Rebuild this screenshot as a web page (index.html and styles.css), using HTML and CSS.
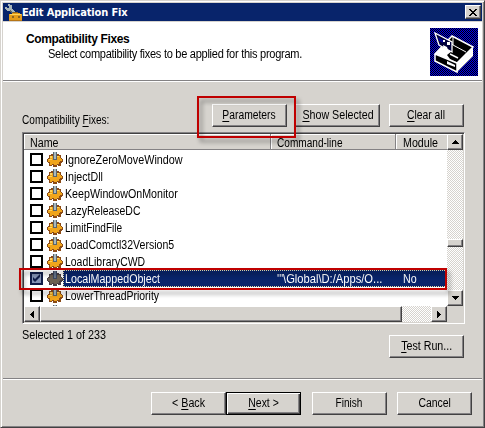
FILE: index.html
```html
<!DOCTYPE html>
<html lang="en">
<head>
<meta charset="utf-8">
<title>Edit Application Fix</title>
<link rel="stylesheet" href="styles.css">
</head>
<body>
<svg class="defs" width="0" height="0" aria-hidden="true">
  <symbol id="gear" viewBox="0 0 16 16">
    <path d="M2 3h2V2h2v1h4V2h2v1h2v3h1v1h1v3h-1v1h-1v3h-3v-1h-1v2H6v-2H5v1H2v-3H1v-1H0V7h1V6h1z" fill="#8a4a16"/>
    <path d="M3 4h3V3h4v1h3v2h1v1h1v2h-2v1h-1v2h-2v1H7v-1H5v1H3v-3H1V7h2z" fill="#f0a51c"/>
    <path d="M3 4h2v2H3zM2 7h3v1H2zM10 4h2v1h-2z" fill="#ffd45c"/>
    <path d="M6 0h4v8H6z" fill="#59656c"/><path d="M7 0h2v7H7z" fill="#a9b8be"/>
  </symbol>
  <symbol id="gear-selected" viewBox="0 0 16 16">
    <path d="M2 3h2V2h2v1h4V2h2v1h2v3h1v1h1v3h-1v1h-1v3h-3v-1h-1v2H6v-2H5v1H2v-3H1v-1H0V7h1V6h1z" fill="#493e43"/>
    <path d="M3 4h3V3h4v1h3v2h1v1h1v2h-2v1h-1v2h-2v1H7v-1H5v1H3v-3H1V7h2z" fill="#6c6051"/>
    <path d="M6 0h4v8H6z" fill="#3b475f"/><path d="M7 0h2v7H7z" fill="#66758a"/>
  </symbol>
</svg>
<div class="window">
  <div class="titlebar">
    <svg class="app-icon" viewBox="0 0 18 17" shape-rendering="crispEdges">
      <path d="M4 0h2v1h2v4h1v1h1v1h1v1h1v2H9V9H8V8H7V7H3V6H2V5H1V3h2v1h2V2H4z" fill="#a9b6bb"/>
      <path d="M6 6h1v1h1v1h1v2H8V9H7V8H6z" fill="#59666e"/>
      <path d="M5 10h3V9h8v1h2v7H5z" fill="#e59c19"/><path d="M6 10h11v1H6z" fill="#ffd45b"/>
      <path d="M9 8h5v1H9zM8 12h2v2H8zM14 12h2v2h-2z" fill="#8d6421"/><path d="M5 16h13v1H5z" fill="#b67516"/>
    </svg>
    <span class="caption">Edit Application Fix</span>
    <span class="close raised"><svg width="8" height="7" viewBox="0 0 8 7" shape-rendering="crispEdges"><path d="M0 0h2v1h1v1h2V1h1V0h2v1H7v1H6v1H5v1h1v1h1v1h1v1H6V6H5V5H3v1H2v1H0V6h1V5h1V4h1V3H2V2H1V1H0z"/></svg></span>
  </div>
  <header class="banner">
    <div class="banner-text">
      <h1>Compatibility Fixes</h1>
      <p class="fit subtitle">Select compatibility fixes to be applied for this program.</p>
    </div>
    <svg class="wizard" viewBox="0 0 48 48">
      <path d="M5 26 22 8 43 19V28L27 44 5 33z" fill="#000"/>
      <path d="M5 26 22 8 43 19 27 35zM5 26V33L27 44V35" fill="none" stroke="#fff" stroke-width="1.5"/>
      <path d="M27 35 43 19V28L27 44z" fill="#fff"/>
      <path d="M5 26 12 19 17 21 22 23 17 27 20 31 24 33 28 35z" fill="#fff"/>
      <path d="M23 9V17L36 24M23 16 12 27" fill="none" stroke="#fff"/>
      <path d="M5 5 22 14V24L9 17z" fill="#00003c" stroke="#fff" stroke-width="1.3"/>
      <path d="M8 9 13 12V15L9 13z" fill="#000090"/>
      <path d="M13 12h2v2h-2zM17 14h3v3h-3zM13 17l4 2 1 3-4 2z" fill="#fff"/>
      <path d="M20 26 28 30" stroke="#fff" stroke-width="1.5"/>
      <path d="M17 33 25 37V39L17 36z" fill="#fff"/>
    </svg>
  </header>
  <main class="content">
    <div class="toolbar">
      <div class="list-label"><span class="fit w84">Compatibility <u>F</u>ixes:</span></div>
      <button class="btn raised"><span class="fit w86"><u>P</u>arameters</span></button>
      <button class="btn raised show"><span class="fit w89"><u>S</u>how Selected</span></button>
      <button class="btn raised"><span class="fit w86"><u>C</u>lear all</span></button>
    </div>
    <div class="list">
      <div class="view">
        <div class="columns"><div class="col"><span class="fit w89">Name</span></div><div class="col"><span class="fit w84">Command-line</span></div><div class="col"><span class="fit w89">Module</span></div></div>
        <div class="rows">
          <div class="row"><i class="check"></i><svg><use href="#gear"/></svg><span class="name fit w90">IgnoreZeroMoveWindow</span></div>
          <div class="row"><i class="check"></i><svg><use href="#gear"/></svg><span class="name fit w89">InjectDll</span></div>
          <div class="row"><i class="check"></i><svg><use href="#gear"/></svg><span class="name fit w89">KeepWindowOnMonitor</span></div>
          <div class="row"><i class="check"></i><svg><use href="#gear"/></svg><span class="name fit w87">LazyReleaseDC</span></div>
          <div class="row"><i class="check"></i><svg><use href="#gear"/></svg><span class="name fit w84">LimitFindFile</span></div>
          <div class="row"><i class="check"></i><svg><use href="#gear"/></svg><span class="name fit w88">LoadComctl32Version5</span></div>
          <div class="row"><i class="check"></i><svg><use href="#gear"/></svg><span class="name fit w87">LoadLibraryCWD</span></div>
          <div class="row selected"><i class="check"><svg class="tick" viewBox="0 0 9 9"><path d="M1 3v3l2 2 5-5V0L3 5z" fill="#101c48"/></svg></i><svg><use href="#gear-selected"/></svg><div class="highlight"><span class="name fit w89">LocalMappedObject</span><span class="fit w93">'"\Global\D:/Apps/O...</span><span class="fit w89">No</span></div></div>
          <div class="row"><i class="check"></i><svg><use href="#gear"/></svg><span class="name fit w87">LowerThreadPriority</span></div>
          <div class="row"><i class="blank"></i><svg><use href="#gear"/></svg></div>
        </div>
      </div>
      <div class="vscroll">
        <span class="arrow raised"><svg viewBox="0 0 7 4" width="7" height="4" shape-rendering="crispEdges"><path d="M3 0h1v1h1v1h1v1h1v1H0V3h1V2h1V1h1z"/></svg></span>
        <span class="track above"></span><span class="thumb-v raised"></span><span class="track"></span>
        <span class="arrow raised"><svg viewBox="0 0 7 4" width="7" height="4" shape-rendering="crispEdges"><path d="M0 0h7v1H6v1H5v1H4v1H3V3H2V2H1V1H0z"/></svg></span>
      </div>
      <div class="hscroll">
        <span class="arrow raised"><svg viewBox="0 0 4 7" width="4" height="7" shape-rendering="crispEdges"><path d="M3 0h1v7H3V6H2V5H1V4H0V3h1V2h1V1h1z"/></svg></span>
        <span class="thumb-h raised"></span><span class="track"></span>
        <span class="arrow raised"><svg viewBox="0 0 4 7" width="4" height="7" shape-rendering="crispEdges"><path d="M0 0h1v1h1v1h1v1h1v1H3v1H2v1H1v1H0z"/></svg></span>
      </div>
      <div class="corner"></div>
    </div>
    <div class="status">
      <span class="count fit w90">Selected 1 of 233</span>
      <button class="btn raised"><span class="fit w89"><u>T</u>est Run...</span></button>
    </div>
  </main>
  <footer class="footer">
    <button class="btn raised"><span class="fit w89">&lt; <u>B</u>ack</span></button>
    <button class="btn raised default"><span class="fit w87"><u>N</u>ext &gt;</span></button>
    <button class="btn raised finish"><span class="fit w84">Finish</span></button>
    <button class="btn raised cancel"><span class="fit w87">Cancel</span></button>
  </footer>
  <div class="callout callout-button"></div>
  <div class="callout callout-row"></div>
</div>
</body>
</html>
```
FILE: styles.css
```css
* { box-sizing: border-box; }
body {
  margin: 0;
  background: #d6d3ce;
  font: 12px/14px "Liberation Sans", Arial, sans-serif;
  color: #000;
  overflow: hidden;
}
.defs { position: absolute; }
u { text-decoration: underline; text-underline-offset: 2px; text-decoration-thickness: 1px; text-decoration-skip-ink: none; }

/* Condensed widths for the dialog face */
.fit { display: inline-block; white-space: nowrap; transform-origin: 0 50%; }
.btn .fit { transform-origin: 50% 50%; }
.w84 { transform: scaleX(.84); }
.w86 { transform: scaleX(.86); }
.w87 { transform: scaleX(.87); }
.w88 { transform: scaleX(.88); }
.w89 { transform: scaleX(.89); }
.w90 { transform: scaleX(.9); }
.w93 { transform: scaleX(.93); }

.window {
  position: relative;
  width: 485px;
  height: 428px;
  display: flex;
  flex-direction: column;
  border: 1px solid;
  border-color: #d6d3ce #424142 #424142 #d6d3ce;
  box-shadow: inset 1px 1px #fff, inset -1px -1px #848284;
  padding: 2px;
}
.raised {
  background: #d6d3ce;
  border: 1px solid;
  border-color: #fff #424142 #424142 #fff;
  box-shadow: inset -1px -1px #848284;
}
.titlebar {
  flex: none;
  height: 18px;
  background: #08246b;
  display: flex;
  align-items: center;
  padding: 0 1px 0 1px;
  color: #fff;
}
.app-icon { width: 18px; height: 17px; flex: none; }
.caption { flex: 1; padding-top: 1px; font: bold 11px/16px "DejaVu Sans Condensed", "DejaVu Sans", sans-serif; white-space: nowrap; letter-spacing: -.15px; }
.close { width: 16px; height: 14px; display: flex; align-items: center; justify-content: center; padding-right: 1px; }
.banner {
  flex: none;
  margin-top: 1px;
  height: 60px;
  background: #fff;
  border-bottom: 1px solid #fff;
  box-shadow: inset 0 -1px #848284;
  display: flex;
  justify-content: space-between;
  padding: 6px 4px 0 23px;
}
.banner-text { padding-top: 4px; white-space: nowrap; }
h1 { margin: 0; font-size: 12px; line-height: 14px; letter-spacing: -.35px; }
.banner p { margin: 1px 0 0 22px; }
.subtitle { letter-spacing: -.3px; transform: scaleX(.92); }
.wizard { width: 48px; height: 48px; background: conic-gradient(#0000f0 25%, #000 0 50%, #0000f0 0 75%, #000 0) 0 0 / 2px 2px; }
.content { flex: none; padding: 22px 16px 0 19px; height: 296px; }
.toolbar { display: flex; height: 28px; align-items: flex-start; }
.list-label { width: 190px; padding-top: 9px; }
.btn {
  width: 75px;
  height: 23px;
  flex: none;
  padding: 0 0 2px;
  margin: 0;
  font: inherit;
  color: #000;
  border-radius: 0;
  display: flex;
  align-items: center;
  justify-content: center;
}
.show { width: 85px; margin: 0 9px 0 8px; padding-left: 1px; }
.list {
  width: 443px;
  height: 192px;
  border: 1px solid;
  border-color: #848284 #fff #fff #848284;
  box-shadow: inset 1px 1px #424142;
  padding: 1px;
  display: grid;
  grid-template: 172px 16px / 423px 16px;
  background: #d6d3ce;
}
.view { background: #fff; overflow: hidden; }
.columns { display: grid; grid-template-columns: 247px 125px 51px; height: 16px; background: #d6d3ce; border-bottom: 1px solid #848284; }
.col { padding-left: 6px; line-height: 18px; border-right: 1px solid #848284; box-shadow: inset 1px 1px #fff; overflow: hidden; }
.col:last-child { border-right: 0; padding-left: 7px; }
.rows { padding-top: 1px; }
.row { height: 17px; display: flex; align-items: center; padding-left: 6px; line-height: 18px; }
.check { width: 13px; height: 13px; border: 2px solid #000; background: #fff; margin-right: 4px; flex: none; display: block; }
.blank { width: 17px; flex: none; }
.row svg { width: 16px; height: 16px; flex: none; }
.row .tick { width: 9px; height: 9px; display: block; }
.name { margin-left: 2px; }
.selected .check { border-color: #101c48; background: #8492b5; }
.highlight {
  width: 384px;
  height: 17px;
  flex: none;
  display: grid;
  grid-template-columns: 214px 126px 1fr;
  color: #fff;
  background: #08246b;
  outline: 1px dotted #e8dfb0;
  outline-offset: -1px;
}
.highlight .fit { justify-self: start; }
.track { background: conic-gradient(#d6d3ce 25%, #fff 0 50%, #d6d3ce 0 75%, #fff 0) 0 0 / 2px 2px; flex: 1; }
.vscroll { display: flex; flex-direction: column; }
.hscroll { display: flex; }
.above { flex: 0 0 89px; }
.thumb-v { height: 8px; flex: none; }
.thumb-h { width: 362px; flex: none; }
.arrow { width: 16px; height: 16px; flex: none; display: flex; align-items: center; justify-content: center; }
.corner { background: #d6d3ce; }
.status { display: flex; justify-content: space-between; align-items: flex-start; padding-top: 11px; width: 442px; }
.count { margin-top: -7px; }
.footer {
  flex: 1;
  border-top: 1px solid #848284;
  box-shadow: inset 0 1px #fff;
  display: flex;
  padding: 13px 0 0 148px;
}
.default { border-color: #000; box-shadow: inset 1px 1px #fff, inset -1px -1px #424142, inset -2px -2px #848284; }
.finish { margin-left: 11px; }
.cancel { margin-left: 10px; }
.callout { position: absolute; border: 2px solid #c00000; filter: drop-shadow(3px 4px 2px rgba(0, 0, 0, .4)); pointer-events: none; }
.callout-button { left: 196px; top: 95px; width: 99px; height: 42px; }
.callout-row { left: 18px; top: 267px; width: 428px; height: 22px; }
```
